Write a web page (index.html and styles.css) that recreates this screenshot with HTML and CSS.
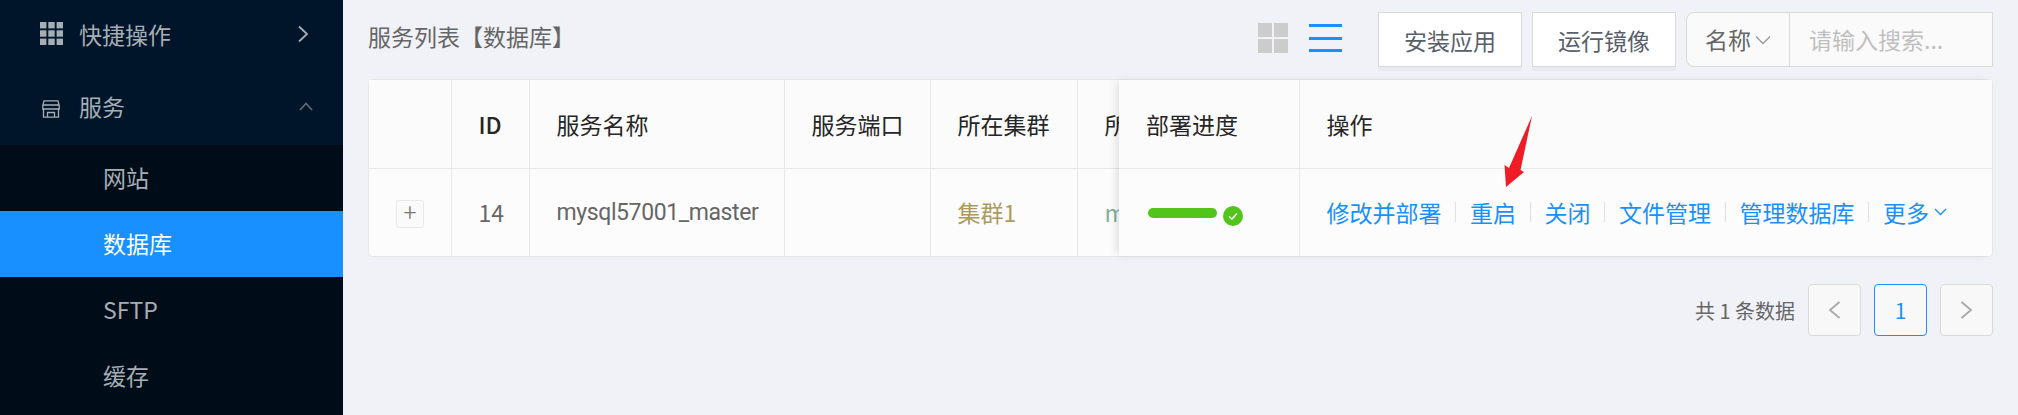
FILE: index.html
```html
<!DOCTYPE html>
<html lang="zh-CN">
<head>
<meta charset="utf-8">
<title>服务列表</title>
<link rel="stylesheet" href="styles.css">
</head>
<body>
<div class="app">
  <aside class="sider">
    <div class="menu-top">
      <div class="menu-row first">
        <svg class="ic-grid" width="23" height="23" viewBox="0 0 23 23"><g fill="#a6adb4"><rect width="6.4" height="6.4"/><rect x="8.3" width="6.4" height="6.4"/><rect x="16.6" width="6.4" height="6.4"/><rect y="8.3" width="6.4" height="6.4"/><rect x="8.3" y="8.3" width="6.4" height="6.4"/><rect x="16.6" y="8.3" width="6.4" height="6.4"/><rect y="16.6" width="6.4" height="6.4"/><rect x="8.3" y="16.6" width="6.4" height="6.4"/><rect x="16.6" y="16.6" width="6.4" height="6.4"/></g></svg>
        <span class="menu-label">快捷操作</span>
        <svg class="ic-right" width="12" height="18" viewBox="0 0 12 18"><path d="M2 1.500 10 9 2 16.500" fill="none" stroke="#a6adb4" stroke-width="1.800"/></svg>
      </div>
      <div class="menu-row second">
        <svg class="ic-shop" width="18" height="18" viewBox="0 0 18 18"><g fill="none" stroke="#a6adb4" stroke-width="1.300"><path d="M2 .8h14l1.200 4.700v3.500H.8V5.500z"/><path d="M.8 5h16.400M1.500 9v8.200h15V9M5.500 17v-4.500h7V17"/></g></svg>
        <span class="menu-label">服务</span>
        <svg class="ic-up" width="14" height="9" viewBox="0 0 14 9"><path d="M1 8 7 1.500 13 8" fill="none" stroke="#5f6a75" stroke-width="1.800"/></svg>
      </div>
    </div>
    <nav class="submenu">
      <a class="sub-item">网站</a>
      <a class="sub-item active">数据库</a>
      <a class="sub-item">SFTP</a>
      <a class="sub-item">缓存</a>
    </nav>
  </aside>
  <main class="main">
    <div class="toolbar">
      <h1 class="title">服务列表【数据库】</h1>
      <div class="view-grid"><i></i><i></i><i></i><i></i></div>
      <div class="view-list"><i></i><i></i><i></i></div>
      <button class="btn btn-install">安装应用</button>
      <button class="btn btn-run">运行镜像</button>
      <div class="search">
        <div class="search-select">名称<svg width="16" height="10" viewBox="0 0 16 10"><path d="M1 1.500 8 8.500 15 1.500" fill="none" stroke="#999" stroke-width="1.400"/></svg></div>
        <input class="search-input" placeholder="请输入搜索...">
      </div>
    </div>
    <div class="table-card">
      <div class="table-scroll">
        <table class="tbl tbl-scroll">
          <thead>
            <tr><th class="c-expand"></th><th class="c-id">ID</th><th class="c-name">服务名称</th><th class="c-port">服务端口</th><th class="c-cluster">所在集群</th><th class="c-node">所在节点</th></tr>
          </thead>
          <tbody>
            <tr><td><button class="expand">+</button></td><td>14</td><td class="name">mysql57001_master</td><td></td><td class="cluster">集群1</td><td class="node">mysql57001</td></tr>
          </tbody>
        </table>
      </div>
      <div class="table-fixed">
        <table class="tbl tbl-fixed">
          <thead>
            <tr><th class="c-progress">部署进度</th><th>操作</th></tr>
          </thead>
          <tbody>
            <tr>
              <td><div class="progress"><span class="bar"></span><svg class="ok" width="20" height="20" viewBox="0 0 20 20"><circle cx="10" cy="10" r="10" fill="#52c41a"/><path d="M6 10.500 9 13 14 7.500" fill="none" stroke="#fff" stroke-width="1.500"/></svg></div></td>
              <td>
                <div class="actions">
                  <a>修改并部署</a><i></i><a>重启</a><i></i><a>关闭</a><i></i><a>文件管理</a><i></i><a>管理数据库</a><i></i><a class="more">更多<svg width="13" height="8" viewBox="0 0 13 8"><path d="M1 1 6.500 6.500 12 1" fill="none" stroke="#1890ff" stroke-width="1.300"/></svg></a>
                </div>
              </td>
            </tr>
          </tbody>
        </table>
      </div>
    </div>
    <div class="pager">
      <span class="total">共 1 条数据</span>
      <a class="page"><svg width="13" height="18" viewBox="0 0 13 18"><path d="M11.500 1 2 9 11.500 17" fill="none" stroke="#a8a8a8" stroke-width="1.800"/></svg></a>
      <a class="page current">1</a>
      <a class="page"><svg width="13" height="18" viewBox="0 0 13 18"><path d="M1.500 1 11 9 1.500 17" fill="none" stroke="#a8a8a8" stroke-width="1.800"/></svg></a>
    </div>
  </main>
</div>
<svg class="arrow" width="30" height="74" viewBox="0 0 30 74"><path d="M29 1 17.500 55 21 57 3 72 1.500 50 6 53Z" fill="#ee1c25"/></svg>
</body>
</html>
```

FILE: styles.css
```css
* { box-sizing: border-box; }
html, body { margin: 0; height: 100%; overflow: hidden; }
body {
  font-family: "Noto Sans CJK SC", sans-serif;
  font-size: 23px;
  background: #f0f2f7;
  color: #666;
}
.app { display: flex; height: 415px; }

.sider { width: 343px; flex: none; background: #001529; display: flex; flex-direction: column; }
.menu-top { height: 145px; flex: none; }
.menu-row { display: flex; align-items: center; color: #a6adb4; padding-left: 40px; }
.menu-row.first { height: 67px; }
.menu-row.second { height: 78px; }
.menu-label { margin-left: 16px; }
.menu-row.second .menu-label { margin-left: 19px; }
.ic-shop { margin: 5px 0 0 2px; }
.ic-right { margin-left: 126px; }
.ic-up { margin-left: 174px; }
.submenu { flex: 1; background: #000c17; display: flex; flex-direction: column; }
.sub-item { height: 66px; flex: none; display: flex; align-items: center; padding: 0 0 2px 103px; color: #a6adb4; }
.sub-item.active { background: #1890ff; color: #fff; }

.main { flex: 1; padding: 12px 25px 0; min-width: 0; }
.toolbar { display: flex; height: 55px; align-items: stretch; margin-bottom: 12px; }
.title { flex: 1; margin: 0; font-size: 23px; font-weight: 400; color: #666; line-height: 48px; }
.view-grid { width: 30px; height: 30px; align-self: flex-start; margin-top: 11px; display: grid; grid-template-columns: 1fr 1fr; gap: 2px; }
.view-grid i { background: #ccc; }
.view-list { width: 33px; height: 28px; align-self: flex-start; margin: 12px 36px 0 21px; display: flex; flex-direction: column; justify-content: space-between; }
.view-list i { height: 3px; background: #1890ff; }
.btn {
  font: inherit; color: #595f69; background: #fff; border: 1px solid #d9d9d9;
  box-shadow: 0 4px 0 rgba(0, 0, 0, .03); padding: 0; cursor: pointer;
}
.btn-install { width: 144px; margin-right: 10px; }
.btn-run { width: 144px; margin-right: 10px; }
.search { width: 307px; display: flex; border: 1px solid #d9d9d9; border-radius: 8px 0 0 8px; background: #fafafa; }
.search-select { width: 103px; flex: none; display: flex; align-items: center; padding: 0 0 2px 18px; gap: 4px; border-right: 1px solid #d9d9d9; color: #666; }
.search-select svg { margin-top: 3px; }
.search-input { flex: 1; min-width: 0; border: 0; outline: 0; background: transparent; font: inherit; padding: 0 0 2px 19px; }
.search-input::placeholder { color: #bfbfbf; opacity: 1; }

.table-card { display: flex; height: 178px; background: #fcfcfc; border: 1px solid #e8e8e8; border-radius: 4px; }
.table-scroll { width: 750px; flex: none; overflow: hidden; }
.table-fixed { flex: 1; background: #fcfcfc; box-shadow: -4px 0 10px -2px rgba(0, 0, 0, .13); border-radius: 0 4px 4px 0; }
.tbl { border-collapse: collapse; table-layout: fixed; }
.tbl-scroll { width: 900px; }
.tbl-fixed { width: 100%; }
.tbl th, .tbl td { padding: 0 0 0 27px; text-align: left; white-space: nowrap; border-right: 1px solid #e8e8e8; }
.tbl th:last-child, .tbl td:last-child { border-right: 0; }
.tbl th { height: 88px; font-weight: 400; color: #262626; background: #fbfbfb; border-bottom: 1px solid #e8e8e8; }
.tbl td { height: 88px; color: #666; }
.c-expand { width: 82px; }
.c-id { width: 78px; }
.c-name { width: 255px; }
.c-port { width: 146px; }
.c-cluster { width: 147px; }
.c-node { width: 192px; }
.c-progress { width: 180px; }
.tbl th.c-id { font-weight: 500; }
.tbl td.name { font-family: Roboto, sans-serif; letter-spacing: -.4px; }
.tbl td.cluster { color: #ab9a5e; }
.tbl td.node { color: #7fae9d; }
.expand {
  width: 28px; height: 28px; padding: 0; display: block; font: 300 23px/24px Roboto, sans-serif; color: #777;
  background: #fafafa; border: 1px solid #e8e8e8; border-radius: 3px; margin-top: 4px;
}
.progress { display: flex; align-items: center; gap: 6px; margin-top: 5px; }
.bar { width: 69px; height: 10px; border-radius: 5px; background: #52c41a; margin-top: -3px; margin-left: 2px; }
.ok { margin-top: 3px; }
.actions { display: flex; align-items: center; color: #1890ff; }
.actions a { white-space: nowrap; display: flex; align-items: center; }
.actions i { width: 1px; height: 20px; background: #e0e0e0; margin: 0 13.75px; }
.more svg { margin-left: 5px; }

.pager { display: flex; align-items: center; justify-content: flex-end; gap: 13px; margin-top: 27px; }
.total { font-size: 20px; }
.page { width: 53px; height: 52px; display: flex; align-items: center; justify-content: center; background: #f8f8f8; border: 1px solid #d9d9d9; border-radius: 4px; font-size: 21px; }
.page.current { border-color: #1890ff; color: #1890ff; }

.arrow { position: absolute; left: 1503px; top: 115px; }
```
